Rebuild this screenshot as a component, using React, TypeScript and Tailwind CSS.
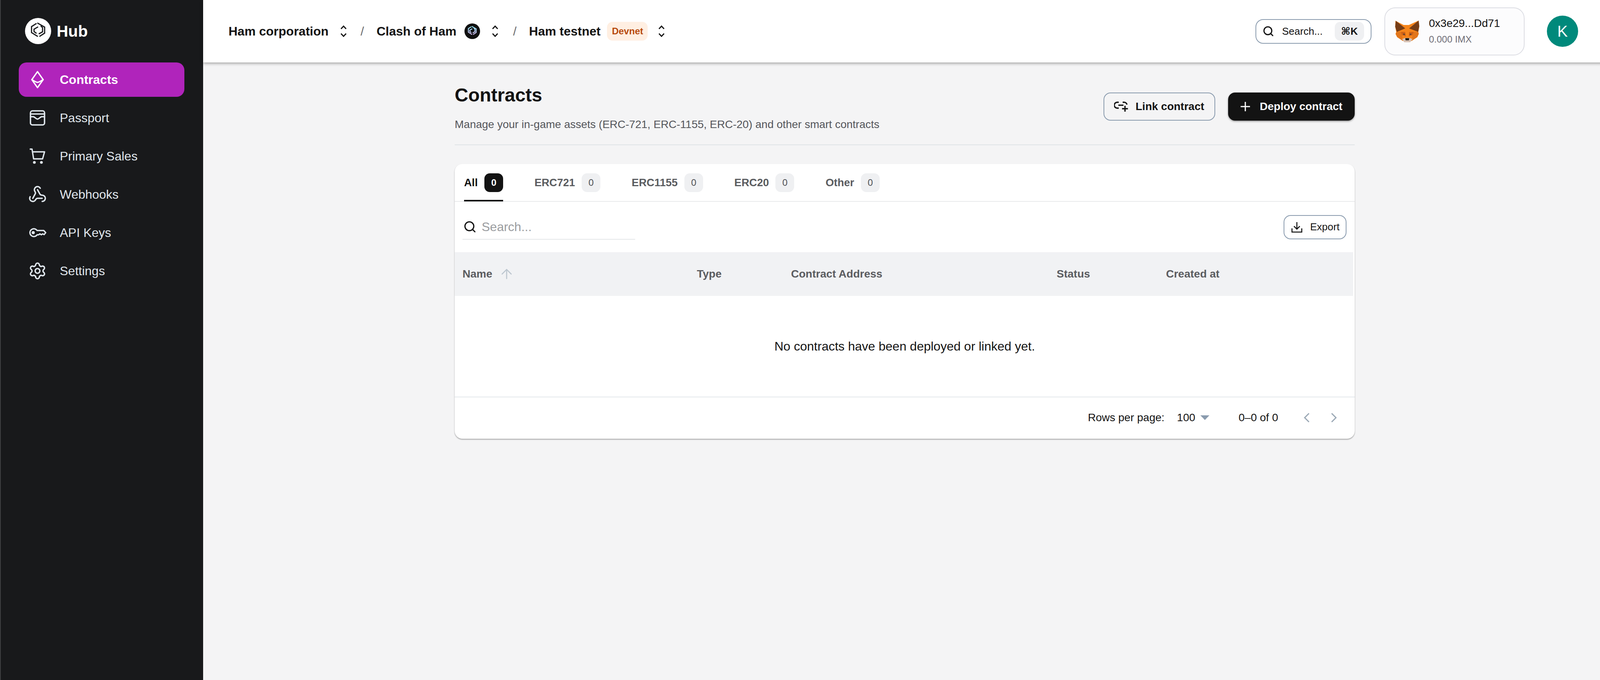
import { ArrowUp, Search, Settings, Webhook } from 'lucide-react';

const EthIcon = () => (
  <svg width="40" height="48" viewBox="0 0 40 48" fill="none" stroke="white" strokeWidth="3.4" strokeLinejoin="round" strokeLinecap="round">
    <path d="M20 3.5 L34.5 24 L20 44.5 L5.5 24 Z" />
    <path d="M5.5 24 C11 27 16 31 20 31 C24 31 29 27 34.5 24" />
  </svg>
);

const WalletIcon = () => (
  <svg width="40" height="40" viewBox="0 0 40 40" fill="none" stroke="#e0e7ed" strokeWidth="3.6" strokeLinejoin="round" strokeLinecap="round">
    <rect x="2" y="2" width="36" height="36" rx="5" />
    <path d="M2 10 H38" />
    <path d="M2 17 H9 C13 17 16 23 20 23 C24 23 27 17 31 17 H38" />
  </svg>
);

const CartIcon = () => (
  <svg width="40" height="40" viewBox="0 0 40 40" fill="none" stroke="#e0e7ed" strokeWidth="3.4" strokeLinejoin="round" strokeLinecap="round">
    <path d="M1 2 H6 L10 27 H33 L38 9 H8" />
    <circle cx="12" cy="36" r="3.6" fill="#e0e7ed" stroke="none" />
    <circle cx="30" cy="36" r="3.6" fill="#e0e7ed" stroke="none" />
  </svg>
);

const KeyIcon = () => (
  <svg width="46" height="24" viewBox="0 0 46 24" fill="none" stroke="#e0e7ed" strokeWidth="3.4" strokeLinejoin="round">
    <path d="M22 6.5 H39 L44 12 L40 17 L36 15 L33 17.5 L29 15 L26 17.5 H22 A10 10 0 1 1 22 6.5 Z" />
    <circle cx="12" cy="12" r="4" fill="#e0e7ed" stroke="none" />
  </svg>
);

// shared hexagon mark, used for the Hub logo and the game icon
const HexMark = ({ stroke, width = 9 }: { stroke: string; width?: number }) => (
  <g fill="none" stroke={stroke} strokeWidth={width}>
    <path d="M128 76 L90 100 V146 L138 176" />
    <path d="M134 72 L190 104 V150 L150 176" />
    <path d="M140 102 L109 120 V138 L128 152" />
    <path d="M160 94 L174 108 V140 L145 156" />
  </g>
);

const HubLogo = () => (
  <svg width="67" height="67" viewBox="40 34 200 200">
    <circle cx="140" cy="134" r="100" fill="white" />
    <HexMark stroke="#18191b" />
  </svg>
);

const GameIcon = () => (
  <svg width="40" height="40" viewBox="40 34 200 200">
    <defs>
      <linearGradient id="game" gradientUnits="userSpaceOnUse" x1="140" y1="70" x2="140" y2="180">
        <stop offset="0" stopColor="#8fe6f5" />
        <stop offset="1" stopColor="#d6b8f0" />
      </linearGradient>
    </defs>
    <circle cx="140" cy="134" r="100" fill="#111" />
    <HexMark stroke="url(#game)" width={12} />
  </svg>
);

const FoxIcon = () => (
  <svg width="80" height="80" viewBox="0 0 240 240">
    <polygon points="37,40 100,72 140,72 215,38 220,85 212,125 216,140 205,165 160,195 95,195 50,165 38,140 43,125 35,85" fill="#f6851b" />
    <polygon points="40,40 112,98 48,125 35,85" fill="#763d16" />
    <polygon points="215,38 142,98 212,125 220,80" fill="#763d16" />
    <polygon points="48,125 78,125 88,150 95,195 50,165 38,140" fill="#e2761b" />
    <polygon points="212,125 178,125 168,150 160,195 205,165 216,140" fill="#e2761b" />
    <polygon points="78,125 112,125 116,160 88,150" fill="#cd6116" />
    <polygon points="178,125 142,125 140,160 168,150" fill="#cd6116" />
    <polygon points="98,138 114,144 98,148" fill="#233447" />
    <polygon points="158,138 142,144 158,148" fill="#233447" />
    <polygon points="88,180 110,172 145,172 168,180 150,205 105,205" fill="#d7c1b3" />
    <polygon points="112,173 143,173 140,190 115,190" fill="#161616" />
  </svg>
);

const UpDown = ({ className = '' }: { className?: string }) => (
  <svg width="17" height="30" viewBox="0 0 17 30" fill="none" stroke="#131313" strokeWidth="3" className={className}>
    <path d="M2 9 L8.5 2 L15 9" />
    <path d="M2 21 L8.5 28 L15 21" />
  </svg>
);

const LinkPlus = () => (
  <svg width="36" height="28" viewBox="0 0 36 28" fill="none" stroke="#131313" strokeWidth="3.4">
    <path d="M12 3 H8 a7.5 7.5 0 0 0 0 15 H12" />
    <path d="M11 10.5 H24" />
    <path d="M22 3 H26 a7.5 7.5 0 0 1 7 6" />
    <path d="M28 12 V27 M20.5 19.5 H35.5" />
  </svg>
);

const ExportIcon = () => (
  <svg width="28" height="28" viewBox="0 0 28 28" fill="none" stroke="#131313" strokeWidth="2.6">
    <path d="M14 1 V19 M6.5 11.5 L14 19 L21.5 11.5" />
    <path d="M1.5 17 V26.5 H26.5 V17" />
  </svg>
);

const navItems = [
  { label: 'Contracts', icon: <EthIcon />, active: true },
  { label: 'Passport', icon: <WalletIcon /> },
  { label: 'Primary Sales', icon: <CartIcon /> },
  { label: 'Webhooks', icon: <Webhook size={48} color="#e0e7ed" strokeWidth={1.8} /> },
  { label: 'API Keys', icon: <KeyIcon /> },
  { label: 'Settings', icon: <Settings size={48} color="#e0e7ed" strokeWidth={1.8} /> },
];

const tabs = [
  { label: 'All', active: true },
  { label: 'ERC721' },
  { label: 'ERC1155' },
  { label: 'ERC20' },
  { label: 'Other' },
];

const App = () => {
  return (
    <div className="flex h-[1742px] w-[4112px] overflow-hidden bg-[#f4f4f5] text-[#131313] [font-family:'Liberation_Sans','DejaVu_Sans',sans-serif]">
      {/* Sidebar */}
      <aside className="flex h-full w-[520px] shrink-0 flex-col border-l-2 border-[#3f4042] bg-[#18191b] pl-[46px] pr-[48px]">
        <div className="flex h-[160px] items-start pl-[16px] pt-[46px]">
          <HubLogo />
          <span className="ml-[14px] mt-[10px] text-[41px] font-bold leading-[48px] text-white">Hub</span>
        </div>
        <nav className="flex flex-col gap-[10px]">
          {navItems.map((item) => (
            <div
              key={item.label}
              className={`flex h-[88px] items-center rounded-[20px] text-[32px] ${
                item.active ? 'bg-[#b024bb] font-bold text-white' : 'text-[#e0e7ed]'
              }`}
            >
              <span className="mr-[9px] flex w-[96px] justify-center">{item.icon}</span>
              {item.label}
            </div>
          ))}
        </nav>
      </aside>

      <main className="flex min-w-0 flex-1 flex-col">
        {/* Top bar */}
        <header className="relative z-10 flex h-[160px] shrink-0 items-center justify-between bg-white pl-[65px] pr-[72px] shadow-[0_2px_8px_rgba(0,0,0,0.4)]">
          <div className="flex items-center text-[32px] font-bold">
            <span>Ham corporation</span>
            <UpDown className="ml-[30px]" />
            <span className="ml-[35px] font-normal text-[#6d6e70]">/</span>
            <span className="ml-[32px]">Clash of Ham</span>
            <span className="ml-[21px] flex"><GameIcon /></span>
            <UpDown className="ml-[30px]" />
            <span className="ml-[37px] font-normal text-[#6d6e70]">/</span>
            <span className="ml-[32px]">Ham testnet</span>
            <span className="ml-[17px] flex h-[48px] w-[104px] items-center justify-center rounded-[14px] bg-[#ffefe2] text-[24px] text-[#b84a0c]">Devnet</span>
            <UpDown className="ml-[27px]" />
          </div>
          <div className="flex items-center">
            <div className="flex h-[63px] w-[297px] items-center rounded-[20px] border-2 border-[#8a9bae] pl-[16px] pr-[17px] text-[26px]">
              <Search size={30} strokeWidth={2.4} className="shrink-0" />
              <span className="ml-[20px]">Search...</span>
              <span className="ml-auto flex h-[48px] w-[75px] items-center justify-center rounded-[14px] bg-[#eff0f2] font-bold">⌘K</span>
            </div>
            <div className="ml-[33px] flex h-[123px] w-[359px] items-center rounded-[28px] border-2 border-[#dcdde3] bg-[#fcfcfd] pl-[14px]">
              <FoxIcon />
              <div className="ml-[18px] flex flex-col">
                <span className="text-[28px] leading-[36px]">0x3e29...Dd71</span>
                <span className="mt-[5px] text-[24px] leading-[36px] text-[#6f6e77]">0.000 IMX</span>
              </div>
            </div>
            <div className="ml-[57px] flex h-[80px] w-[80px] items-center justify-center rounded-full bg-[#00897b] text-[40px] text-white">K</div>
          </div>
        </header>

        {/* Page content */}
        <div className="mx-auto w-[2304px] pt-[56px]">
          <div className="flex items-start justify-between border-b-2 border-[#dfe3e6] pb-[31px]">
            <div>
              <h1 className="text-[48px] font-bold leading-[56px]">Contracts</h1>
              <p className="mt-[27px] text-[28px] leading-[40px] text-[#54565b]">
                Manage your in-game assets (ERC-721, ERC-1155, ERC-20) and other smart contracts
              </p>
            </div>
            <div className="mt-[21px] flex gap-[33px] text-[28px] font-bold">
              <button className="flex h-[72px] w-[286px] items-center rounded-[18px] border-2 border-[#8a9bae] pl-[25px]">
                <LinkPlus />
                <span className="ml-[19px]">Link contract</span>
              </button>
              <button className="flex h-[72px] w-[324px] items-center rounded-[18px] bg-[#131313] pl-[31px] text-white shadow-[0_2px_4px_rgba(0,0,0,0.4)]">
                <svg width="26" height="26" viewBox="0 0 26 26" fill="none" stroke="white" strokeWidth="3">
                  <path d="M13 1 V25 M1 13 H25" />
                </svg>
                <span className="ml-[24px]">Deploy contract</span>
              </button>
            </div>
          </div>

          <section className="mt-[48px] h-[704px] rounded-[20px] bg-white shadow-[0_2px_3px_rgba(0,0,0,0.35)]">
            {/* Tabs */}
            <div className="flex h-[97px] gap-[80px] border-b-2 border-[#e9eaec] pl-[24px]">
              {tabs.map((tab) => (
                <div
                  key={tab.label}
                  className={`flex h-[96px] items-center gap-[17px] border-b-[4px] pt-[4px] text-[27.5px] font-bold ${
                    tab.active ? 'border-[#131313] text-[#131313]' : 'border-transparent text-[#5a5c60]'
                  }`}
                >
                  {tab.label}
                  <span
                    className={`flex h-[48px] w-[48px] items-center justify-center rounded-[14px] text-[24px] ${
                      tab.active ? 'bg-[#131313] text-white' : 'bg-[#eff0f2] font-normal text-[#4f5155]'
                    }`}
                  >
                    0
                  </span>
                </div>
              ))}
            </div>

            {/* Search + export */}
            <div className="flex h-[129px] items-center justify-between pl-[20px] pr-[21px]">
              <div className="flex h-[65px] w-[442px] items-center border-b-2 border-[#e5e7e9] pl-[2px]">
                <Search size={34} strokeWidth={2.2} className="shrink-0" />
                <span className="ml-[13px] text-[32px] text-[#9a9c9f]">Search...</span>
              </div>
              <button className="flex h-[62px] w-[161px] items-center rounded-[18px] border-2 border-[#8a9bae] pl-[18px] text-[26px]">
                <ExportIcon />
                <span className="ml-[20px]">Export</span>
              </button>
            </div>

            {/* Table head */}
            <div className="mr-[4px] grid h-[112px] grid-cols-[600px_241px_680px_280px_1fr] items-center bg-[#f1f2f4] pl-[20px] text-[28px] font-bold text-[#5b5c60]">
              <div className="flex items-center">
                Name
                <ArrowUp size={40} color="#bcc6cf" strokeWidth={1.6} className="ml-[17px]" />
              </div>
              <div>Type</div>
              <div>Contract Address</div>
              <div>Status</div>
              <div>Created at</div>
            </div>

            {/* Empty state */}
            <div className="flex h-[260px] items-center justify-center border-b-2 border-[#e4e8ec] text-[32px]">
              No contracts have been deployed or linked yet.
            </div>

            {/* Pagination */}
            <div className="flex h-[104px] items-center justify-end pr-[45px] text-[28px]">
              <span>Rows per page:</span>
              <span className="ml-[32px]">100</span>
              <svg width="25" height="12" viewBox="0 0 25 12" className="ml-[12px]">
                <path d="M1 0 H24 L12.5 12 Z" fill="#8a9bae" />
              </svg>
              <span className="ml-[74px]">0–0 of 0</span>
              <svg width="16" height="24" viewBox="0 0 16 24" fill="none" stroke="#9aa8b5" strokeWidth="3" className="ml-[65px]">
                <path d="M14 1 L3 12 L14 23" />
              </svg>
              <svg width="16" height="24" viewBox="0 0 16 24" fill="none" stroke="#9aa8b5" strokeWidth="3" className="ml-[54px]">
                <path d="M2 1 L13 12 L2 23" />
              </svg>
            </div>
          </section>
        </div>
      </main>
    </div>
  );
};

export default App;
